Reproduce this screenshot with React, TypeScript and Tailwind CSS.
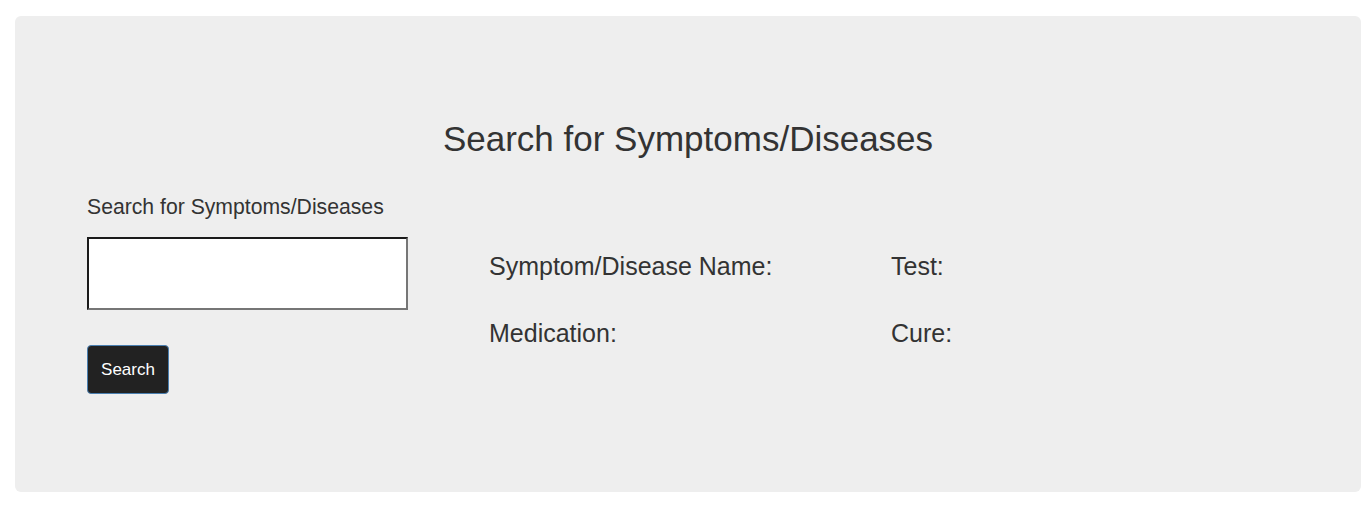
import React from 'react';

const App: React.FC = () => {
  const details = [
    { label: 'Symptom/Disease Name:', value: '' },
    { label: 'Test:', value: '' },
    { label: 'Medication:', value: '' },
    { label: 'Cure:', value: '' },
  ];

  return (
    <div className="min-h-screen bg-white px-[15px] pt-[16px] font-['Liberation_Sans',Arial,sans-serif] text-[#333333]">
      <div className="h-[476px] w-[1346px] rounded-md bg-[#eeeeee] px-[72px] pt-[102px]">
        <h2 className="text-center text-[35px] leading-[42px]">Search for Symptoms/Diseases</h2>

        <div className="mt-[34px] flex">
          {/* Search form */}
          <div className="w-[322px]">
            <label className="block whitespace-nowrap text-[21.2px] leading-[25px]">Search for Symptoms/Diseases</label>
            <input
              type="text"
              className="mt-[18px] block h-[73px] w-[321px] border-2 border-t-[#1a1a1a] border-l-[#1a1a1a] border-b-[#767676] border-r-[#767676] bg-white px-2 outline-none"
            />
            <button className="mt-[35px] h-[49px] w-[82px] rounded border border-[#4a7fb0] bg-[#222222] text-[17px] text-white">
              Search
            </button>
          </div>

          {/* Result details */}
          <div className="ml-[80px] mt-[57px] grid grid-cols-[402px_auto] gap-y-[37px] self-start">
            {details.map((d) => (
              <div key={d.label} className="text-[25px] leading-[30px]">
                {d.label} {d.value}
              </div>
            ))}
          </div>
        </div>
      </div>
    </div>
  );
};

export default App;
